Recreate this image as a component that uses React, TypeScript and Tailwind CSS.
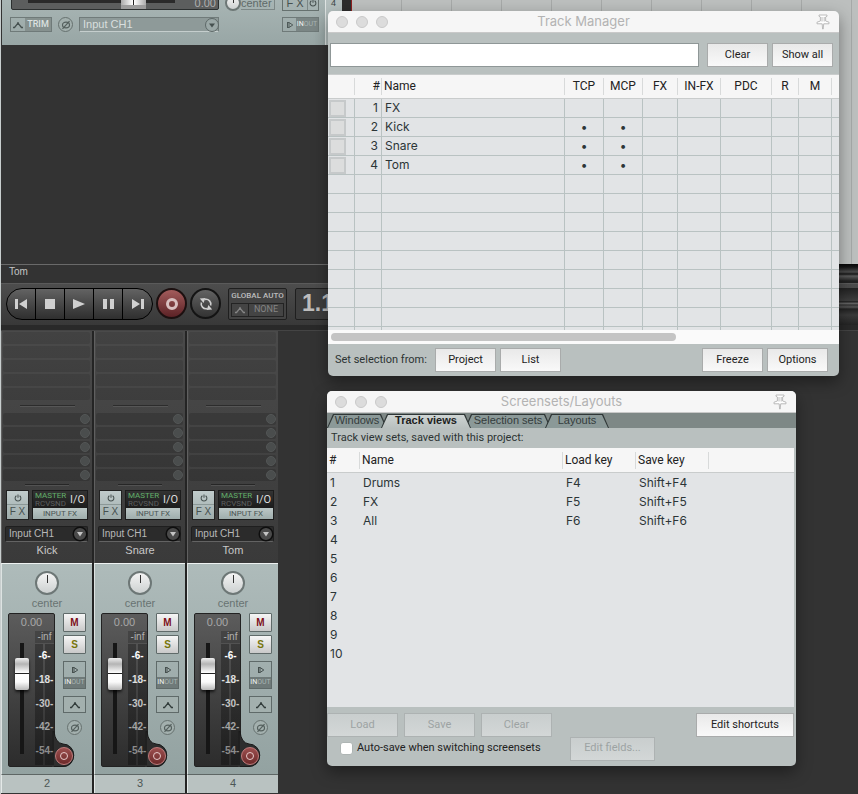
import React from 'react';
import { useState } from 'react';
import clsx from 'clsx';

interface TrackType {
    no: number;
    name: string;
    visible: boolean;
}

interface ScreensetType {
    name: string;
    load: string;
    save: string;
}

interface BtnType {
    content: string;
    className?: string;
    disabled?: boolean;
}

const tracks: TrackType[] = [
    { no: 1, name: 'FX', visible: false },
    { no: 2, name: 'Kick', visible: true },
    { no: 3, name: 'Snare', visible: true },
    { no: 4, name: 'Tom', visible: true },
];

const screensets: ScreensetType[] = [
    { name: 'Drums', load: 'F4', save: 'Shift+F4' },
    { name: 'FX', load: 'F5', save: 'Shift+F5' },
    { name: 'All', load: 'F6', save: 'Shift+F6' },
];

const managerCols = [
    { label: '', width: 'w-[27px]' },
    { label: '#', width: 'w-[27px]' },
    { label: 'Name', width: 'w-[183px]' },
    { label: 'TCP', width: 'w-[39px]' },
    { label: 'MCP', width: 'w-[39px]' },
    { label: 'FX', width: 'w-[35px]' },
    { label: 'IN-FX', width: 'w-[43px]' },
    { label: 'PDC', width: 'w-[51px]' },
    { label: 'R', width: 'w-[27px]' },
    { label: 'M', width: 'w-[33px]' },
];

const meterMarks = [
    { label: '-6-', color: 'text-white' },
    { label: '-18-', color: 'text-[#e0e0e0]' },
    { label: '-30-', color: 'text-[#c4c4c4]' },
    { label: '-42-', color: 'text-[#a4a4a4]' },
    { label: '-54-', color: 'text-[#8c8c8c]' },
];

// ---------- icons ----------
const EnvelopeIcon = ({ className }: { className?: string }) => (
    <svg
        viewBox="0 0 12 8"
        className={clsx('h-2 w-3', className)}
        fill="none"
        stroke="currentColor"
    >
        <path
            d="M1 6.5H2.5L6 2.2L9.5 6.5H11"
            strokeWidth="1.3"
        />
        <circle
            cx="6"
            cy="2.2"
            r="0.6"
            fill="currentColor"
        />
    </svg>
);

const PhaseIcon = () => (
    <svg
        viewBox="0 0 10 10"
        className="size-[10px]"
        fill="none"
        stroke="currentColor"
        strokeWidth="1.2"
    >
        <ellipse
            cx="5"
            cy="5"
            rx="3.5"
            ry="2.8"
        />
        <path d="M1.5 8.8L8.5 1.2" />
    </svg>
);

const PowerIcon = () => (
    <svg
        viewBox="0 0 10 10"
        className="size-2"
        fill="none"
        stroke="currentColor"
        strokeWidth="1.3"
    >
        <path d="M3 2.2A3.6 3.6 0 1 0 7 2.2M5 0.5V4.8" />
    </svg>
);

const MonitorIcon = () => (
    <svg
        viewBox="0 0 8 8"
        className="size-2"
        fill="none"
        stroke="currentColor"
    >
        <path d="M1.5 1V7M1.5 1.5H3V6.5H1.5M3 1.5L6.8 4L3 6.5" />
    </svg>
);

const PinIcon = () => (
    <svg
        viewBox="0 0 16 16"
        className="h-4 w-4"
        fill="#fff"
        stroke="#b4b4b4"
        strokeWidth="0.9"
    >
        <path d="M4 1H12V2.3L10.6 3V7L14 8.2V9.8H8.7L8.2 15H7.6L7.2 9.8H2V8.2L5.4 7V3L4 2.3Z" />
        <path d="M7 3V7.5M9.2 3V7.5" />
    </svg>
);

// ---------- window pieces ----------
const TitleBar = ({ title }: { title: string }) => (
    <div className="flex h-[22px] items-center border-b border-[#c9c9c9] bg-[#f6f6f6] px-2">
        <div className="flex flex-1 gap-2">
            {['Close', 'Minimize', 'Zoom'].map((name) => (
                <button
                    key={name}
                    type="button"
                    aria-label={name}
                    className="size-3 rounded-full border border-[#c9c9c9] bg-[#dcdcdc]"
                />
            ))}
        </div>
        <h2 className="pt-px text-[13px] text-[#b3b3b3]">{title}</h2>
        <div className="flex flex-1 justify-end">
            <button
                type="button"
                aria-label="Pin window"
            >
                <PinIcon />
            </button>
        </div>
    </div>
);

const WindowBtn = ({ content, className, disabled }: BtnType) => (
    <button
        type="button"
        disabled={disabled}
        className={clsx(
            'h-6 shrink-0 border font-[Roboto,sans-serif] text-[11px]',
            disabled
                ? 'border-[#adb2b2] bg-linear-to-b from-[#c9cece] to-[#d3d7d7] text-[#9da3a3]'
                : 'border-[#a9abab] bg-linear-to-b from-[#e9e9e9] to-[#f9f9f9] text-[#222]',
            className
        )}
    >
        {content}
    </button>
);

const TrackManager = () => {
    const [filter, setFilter] = useState('');
    return (
        <section className="absolute top-[11px] left-[327px] w-[511px] overflow-hidden rounded-[5px] bg-[#b9c0bf] shadow-[0_6px_16px_rgba(0,0,0,0.4)]">
            <TitleBar title="Track Manager" />
            <div className="flex h-[42px] items-center gap-1 border-b border-[#c9cccc] pt-[3px] pr-[6px] pl-[2px]">
                <input
                    type="text"
                    aria-label="Filter tracks"
                    className="mr-1 h-6 min-w-0 flex-1 border border-[#8f9797] bg-white px-1 text-xs"
                    value={filter}
                    onChange={(e) => setFilter(e.target.value)}
                />
                <WindowBtn
                    content="Clear"
                    className="w-[61px]"
                />
                <WindowBtn
                    content="Show all"
                    className="w-[61px]"
                />
            </div>
            <div className="h-[255px] overflow-hidden bg-[#e2e4e6]">
                <table className="w-full table-fixed border-separate border-spacing-0 text-xs text-[#2c3537]">
                    <thead>
                        <tr className="h-6 bg-[#f6f6f6] font-[Roboto,sans-serif] text-[#222]">
                            {managerCols.map((col) => (
                                <th
                                    key={col.label}
                                    className={clsx('border-b border-[#c9cccc] p-0 font-normal', col.width)}
                                >
                                    <div
                                        className={clsx(
                                            'h-[17px] border-r border-[#d8dada] leading-[17px]',
                                            col.label === '#' && 'pr-px text-right',
                                            col.label === 'Name' && 'pl-[2px] text-left'
                                        )}
                                    >
                                        {col.label}
                                    </div>
                                </th>
                            ))}
                            <th className="border-b border-[#c9cccc] p-0" />
                        </tr>
                    </thead>
                    <tbody className="[&_td]:h-[19px] [&_td]:border-r [&_td]:border-b [&_td]:border-[#b9c2c2] [&_td]:p-0 [&_td]:leading-[18px]">
                        {Array.from({ length: 13 }, (_, i) => {
                            const track = tracks[i];
                            return (
                                <tr key={i}>
                                    <td>
                                        {track && (
                                            <button
                                                type="button"
                                                aria-label={`Colour of ${track.name}`}
                                                className="ml-px block size-[17px] border-2 border-[#c6c9ca] bg-[#dcdddd]"
                                            />
                                        )}
                                    </td>
                                    <td className="pr-[3px]! text-right">{track?.no}</td>
                                    <td className="pl-[3px]!">{track?.name}</td>
                                    {managerCols.slice(3).map((col, c) => (
                                        <td
                                            key={col.label}
                                            className="text-center"
                                        >
                                            {track?.visible && c < 2 ? '•' : ''}
                                        </td>
                                    ))}
                                    <td className="border-r-0!" />
                                </tr>
                            );
                        })}
                    </tbody>
                </table>
            </div>
            <div className="flex h-[14px] items-center bg-[#fafafa] px-[3px]">
                <div className="h-2 w-[345px] rounded-full bg-[#c4c4c4]" />
            </div>
            <div className="flex h-8 items-center gap-1 pr-[11px] pl-[7px] font-[Roboto,sans-serif] text-[11px] text-[#2c3333]">
                <span className="w-[96px] whitespace-nowrap">Set selection from:</span>
                <WindowBtn
                    content="Project"
                    className="w-[61px]"
                />
                <WindowBtn
                    content="List"
                    className="w-[61px]"
                />
                <div className="flex-1" />
                <WindowBtn
                    content="Freeze"
                    className="w-[61px]"
                />
                <WindowBtn
                    content="Options"
                    className="w-[61px]"
                />
            </div>
        </section>
    );
};

const tabs = [
    { label: 'Windows', width: 'w-[60px]' },
    { label: 'Track views', width: 'w-[90px]' },
    { label: 'Selection sets', width: 'w-[86px]' },
    { label: 'Layouts', width: 'w-[64px]' },
];

const Screensets = () => {
    const [active, setActive] = useState('Track views');
    return (
        <section className="absolute top-[391px] left-[326px] w-[469px] overflow-hidden rounded-[5px] bg-[#b9c0bf] shadow-[0_6px_16px_rgba(0,0,0,0.4)]">
            <TitleBar title="Screensets/Layouts" />
            <div
                role="tablist"
                className="flex h-[15px] bg-[#7e8886] font-['Liberation_Sans',sans-serif]"
            >
                {tabs.map((tab) => (
                    <button
                        key={tab.label}
                        type="button"
                        role="tab"
                        aria-selected={active === tab.label}
                        onClick={() => setActive(tab.label)}
                        className={clsx(
                            'relative mt-px -mr-[6px] h-[14px] bg-[#2f3636] text-[11px] leading-3 [clip-path:polygon(6px_0,calc(100%-6px)_0,100%_100%,0_100%)]',
                            tab.width,
                            active === tab.label && 'z-10 font-bold'
                        )}
                    >
                        <span
                            className={clsx(
                                'block h-[14px] whitespace-nowrap [clip-path:polygon(7px_1px,calc(100%-7px)_1px,calc(100%-1px)_100%,1px_100%)]',
                                active === tab.label
                                    ? 'bg-linear-to-b from-[#d0d6d5] to-[#b9c0bf] text-[#1d2222]'
                                    : 'bg-[#8b9998] text-[#343c3c]'
                            )}
                        >
                            {tab.label}
                        </span>
                    </button>
                ))}
            </div>
            <p className="h-5 pl-1 font-[Roboto,sans-serif] text-[11px] leading-5 text-[#2c3333]">
                Track view sets, saved with this project:
            </p>
            <div className="mr-[2px] h-[259px] bg-[#e2e4e6]">
                <table className="w-full table-fixed border-separate border-spacing-0 text-left text-xs text-[#2c3537]">
                    <thead>
                        <tr className="h-[25px] bg-[#f6f6f6] font-[Roboto,sans-serif] text-[#222] [&_div]:h-[17px] [&_div]:border-r [&_div]:border-[#d8dada] [&_div]:pl-[2px] [&_div]:leading-[17px] [&_th]:border-b [&_th]:border-[#c9cccc] [&_th]:p-0 [&_th]:font-normal">
                            <th className="w-[33px]">
                                <div>#</div>
                            </th>
                            <th className="w-[203px]">
                                <div>Name</div>
                            </th>
                            <th className="w-[73px]">
                                <div>Load key</div>
                            </th>
                            <th className="w-[73px]">
                                <div>Save key</div>
                            </th>
                            <th />
                        </tr>
                    </thead>
                    <tbody className="[&_td]:h-[19px] [&_td]:p-0 [&_td]:pl-[3px]">
                        {Array.from({ length: 10 }, (_, i) => (
                            <tr key={i}>
                                <td>{i + 1}</td>
                                <td>{screensets[i]?.name}</td>
                                <td>{screensets[i]?.load}</td>
                                <td>{screensets[i]?.save}</td>
                                <td />
                            </tr>
                        ))}
                    </tbody>
                </table>
            </div>
            <div className="h-[59px] pt-[6px] pr-[2px]">
                <div className="flex gap-[6px]">
                    <WindowBtn
                        content="Load"
                        disabled
                        className="w-[71px]"
                    />
                    <WindowBtn
                        content="Save"
                        disabled
                        className="w-[71px]"
                    />
                    <WindowBtn
                        content="Clear"
                        disabled
                        className="w-[71px]"
                    />
                    <div className="flex-1" />
                    <WindowBtn
                        content="Edit shortcuts"
                        className="w-[98px]"
                    />
                </div>
                <div className="flex h-[23px] items-center pl-[13px] font-[Roboto,sans-serif] text-[11px] text-[#222]">
                    <label className="flex w-[230px] items-center gap-1">
                        <input
                            type="checkbox"
                            className="size-[13px] appearance-none rounded-[3px] border border-[#aeb5b4] bg-white checked:bg-[#3b82f6]"
                        />
                        Auto-save when switching screensets
                    </label>
                    <WindowBtn
                        content="Edit fields..."
                        disabled
                        className="w-[85px]"
                    />
                </div>
            </div>
        </section>
    );
};

// ---------- channel controls ----------
const PhaseBtn = () => (
    <button
        type="button"
        aria-label="Phase"
        className="flex size-[15px] shrink-0 items-center justify-center rounded-full border border-[#66716f] bg-[#a3b0ae] text-[#55605e]"
    >
        <PhaseIcon />
    </button>
);

const KnobInput = ({ label, className }: { label: string; className: string }) => (
    <input
        type="range"
        aria-label={label}
        defaultValue={50}
        className={clsx(
            'shrink-0 appearance-none rounded-full border-2 border-[#6d7776] bg-linear-to-b from-[#f4f4f4] to-[#cdd1d1] [&::-webkit-slider-thumb]:w-px [&::-webkit-slider-thumb]:appearance-none [&::-webkit-slider-thumb]:bg-[#333]',
            className
        )}
    />
);

const TrackPanel = () => (
    <div className="h-[45px] w-[324px] overflow-hidden border-r border-[#dfe4e3] bg-linear-to-b from-[#a8b5b4] to-[#98a6a5]">
        <div className="-mt-[15px] flex h-[26px] items-end pr-[6px] pl-[9px]">
            <div className="mb-px flex h-6 w-[208px] items-end rounded-[2px] border border-[#2c3030] bg-[#5c5e5e] text-[11px] leading-[11px] text-[#b0b0b0]">
                <input
                    type="range"
                    aria-label="Tom volume"
                    defaultValue={76}
                    className="ml-4 h-6 w-[147px] appearance-none bg-[linear-gradient(#2a2a2a,#2a2a2a)] bg-[length:100%_3px] bg-[position:0_15px] bg-no-repeat [&::-webkit-slider-thumb]:h-6 [&::-webkit-slider-thumb]:w-[25px] [&::-webkit-slider-thumb]:appearance-none [&::-webkit-slider-thumb]:border-b-4 [&::-webkit-slider-thumb]:border-[#9c9c9c] [&::-webkit-slider-thumb]:bg-[linear-gradient(90deg,#aaa,#fff_12px,#222_12px,#222_13px,#fff_13px,#aaa)]"
                />
                <span className="flex-1 pr-[2px] text-right">0.00</span>
            </div>
            <div className="ml-[6px] flex h-4 items-start">
                <KnobInput
                    label="Tom pan"
                    className="size-4 [&::-webkit-slider-thumb]:-mt-[6px] [&::-webkit-slider-thumb]:h-[6px]"
                />
                <span className="h-[15px] border-r border-b border-[#7d8887] pr-[2px] text-[11px] leading-4 text-[#5f6a69]">
                    center
                </span>
            </div>
            <div className="ml-auto flex h-6 items-end border border-[#66716f] text-[#46504f]">
                <button
                    type="button"
                    className="h-[22px] w-6 pt-2 text-[11px] leading-[14px]"
                >
                    F X
                </button>
                <button
                    type="button"
                    aria-label="Bypass effects"
                    className="flex h-[22px] w-[11px] items-end justify-center border-l border-[#7d8887] pb-[3px]"
                >
                    <PowerIcon />
                </button>
            </div>
        </div>
        <div className="mt-[6px] flex h-[15px] items-center pr-[6px] pl-2 text-[#4f5a59]">
            <button
                type="button"
                className="flex h-[15px] w-[42px] items-center border border-[#6f7a79] font-[Roboto,sans-serif] text-[9px] font-medium text-[#dbe1e0]"
            >
                <EnvelopeIcon className="mx-px shrink-0 text-[#465150]" />
                <span className="flex h-[13px] flex-1 items-center justify-center bg-[#86918f]">TRIM</span>
            </button>
            <div className="ml-[6px] flex">
                <PhaseBtn />
            </div>
            <div className="relative ml-[6px] flex">
                <select
                    aria-label="Tom input"
                    className="h-[15px] w-[140px] appearance-none border border-[#707b7a] border-b-[#c5cecd] bg-[#8e9a99] pl-[3px] text-[11px] leading-[13px] text-[#d9dfde]"
                >
                    <option>Input CH1</option>
                </select>
                <svg
                    viewBox="0 0 14 14"
                    className="pointer-events-none absolute top-px right-0 size-[14px]"
                >
                    <circle
                        cx="7"
                        cy="7"
                        r="6.5"
                        fill="#9ba8a7"
                        stroke="#5d6867"
                    />
                    <path
                        d="M4 5.5H10L7 9.5Z"
                        fill="#465150"
                    />
                </svg>
            </div>
            <button
                type="button"
                className="ml-auto flex h-[15px] w-[37px] items-center border border-[#6f7a79] font-[Roboto,sans-serif] text-[7px] text-[#a9b5b4]"
            >
                <span className="flex w-[13px] justify-center text-[#4f5a59]">
                    <MonitorIcon />
                </span>
                <span className="flex h-[13px] flex-1 items-center justify-center bg-[#7b8685]">
                    <span className="text-[#f0f4f3]">IN</span>OUT
                </span>
            </button>
        </div>
    </div>
);

const Strip = ({ track }: { track: TrackType }) => (
    <section
        aria-label={track.name}
        className="w-[93px] border-r-2 border-[#242424] last:border-transparent"
    >
        <div className="h-[232px] border-l border-[#606060] bg-linear-to-b from-[#4a4a4a] to-[#3a3a3a] text-[#c4c8c8]">
            <div className="flex flex-col gap-[2px] pt-px pr-[2px] pl-px">
                {[0, 1, 2, 3, 4].map((i) => (
                    <div
                        key={i}
                        className="h-3 rounded-[2px] bg-black/10"
                    />
                ))}
            </div>
            <div className="mx-auto mt-[5px] h-[2px] w-[55px] border-b border-[#565656] bg-[#2c2c2c]" />
            <div className="mt-[6px] flex flex-col gap-[2px] pr-[2px] pl-px">
                {[0, 1, 2, 3, 4].map((i) => (
                    <div
                        key={i}
                        className="flex h-3 items-center justify-end rounded-[2px] bg-black/15"
                    >
                        <span className="size-[10px] rounded-full border border-[#535656] bg-[#4a4d4d]" />
                    </div>
                ))}
            </div>
            <div className="mx-auto mt-[3px] h-[2px] w-11 border-b border-[#525252] bg-[#262626]" />
            <div className="mt-1 flex justify-between pr-1 pl-1">
                <div className="flex h-[30px] w-[23px] flex-col border border-[#222] bg-linear-to-b from-[#c0cbcb] to-[#9fadac] text-[#46504f]">
                    <button
                        type="button"
                        aria-label="Bypass effects"
                        className="flex flex-1 items-center justify-center border-b border-[#8b9897]"
                    >
                        <PowerIcon />
                    </button>
                    <button
                        type="button"
                        className="flex-1 text-[10px] leading-[14px]"
                    >
                        F X
                    </button>
                </div>
                <div className="flex w-[56px] flex-col border border-[#1c1c1c] bg-[#242424] font-[Roboto,sans-serif]">
                    <button
                        type="button"
                        className="flex h-[17px] items-center justify-between bg-linear-to-b from-[#333] to-[#1c1c1c] px-[2px] whitespace-nowrap"
                    >
                        <span className="text-left text-[8px] leading-2">
                            <span className="block text-[#62b06a]">MASTER</span>
                            <span className="block text-[#5c5f5f]">RCVSND</span>
                        </span>
                        <span className="text-[11px] leading-3 text-[#dedede]">I/O</span>
                    </button>
                    <button
                        type="button"
                        className="h-[11px] bg-linear-to-b from-[#bcc8c7] to-[#9fadac] text-[8px] leading-[11px] text-[#4b5655]"
                    >
                        INPUT FX
                    </button>
                </div>
            </div>
            <div className="relative mt-[6px] mr-1 ml-[3px]">
                <select
                    aria-label={`${track.name} input`}
                    className="block h-4 w-full appearance-none rounded-[2px] border border-[#1f1f1f] border-b-[#636363] bg-[#2b2b2b] pl-[3px] text-[10px] leading-[14px] text-[#b8b8b8]"
                >
                    <option>Input CH1</option>
                </select>
                <svg
                    viewBox="0 0 16 16"
                    className="pointer-events-none absolute top-0 right-0 size-4"
                >
                    <circle
                        cx="8"
                        cy="8"
                        r="6.8"
                        fill="#4a4a4a"
                        stroke="#0e0e0e"
                        strokeWidth="1.5"
                    />
                    <path
                        d="M5 6H11L8 10.5Z"
                        fill="#c4c4c4"
                    />
                </svg>
            </div>
            <p className="text-center text-[11px] leading-4 text-[#c8c8c8]">{track.name}</p>
        </div>
        <div className="h-[211px] border-t border-l border-[#dde3e2] border-t-[#eef2f1] bg-linear-to-b from-[#aebbba] to-[#93a2a1]">
            <div className="flex h-[49px] flex-col items-center pt-[7px] text-[11px] leading-4 text-[#687372]">
                <KnobInput
                    label={`${track.name} pan`}
                    className="size-6 [&::-webkit-slider-thumb]:-mt-2 [&::-webkit-slider-thumb]:h-2"
                />
                center
            </div>
            <div className="flex gap-2 pl-[6px]">
                <div className="relative h-[154px] w-[47px] rounded-[2px] border border-[#222] bg-linear-to-b from-[#5c5c5c] to-[#2c2c2c] text-[10px]">
                    {/* record arm sits in a bulge on the corner of the fader panel */}
                    <svg
                        viewBox="0 0 24 36"
                        className="absolute top-[117px] left-[43px] h-9 w-6"
                    >
                        <path
                            d="M0 0H2Q3 12 11 13A10.5 11 0 0 1 11 36H0Z"
                            fill="#2e2e2e"
                        />
                        <path
                            d="M2 0Q3 12 11 13A10.5 11 0 0 1 11 35.5H2"
                            fill="none"
                            stroke="#1a1a1a"
                        />
                    </svg>
                    <button
                        type="button"
                        aria-label={`Record arm ${track.name}`}
                        className="absolute top-[133px] left-[46px] flex size-[18px] items-center justify-center rounded-full border border-[#c27c7c] bg-linear-to-b from-[#9c4f4f] to-[#6d2a2a]"
                    >
                        <span className="size-2 rounded-full border-[1px] border-[#e6c9c9]" />
                    </button>
                    <p className="pt-[2px] text-center text-[11px] leading-3 text-[#a8a8a8]">0.00</p>
                    <div className="flex justify-between pl-[6px]">
                        <input
                            type="range"
                            aria-label={`${track.name} volume`}
                            defaultValue={81}
                            className="mt-[15px] h-[111px] w-[14px] appearance-none bg-[linear-gradient(#161616,#161616)] bg-[length:4px_100%] bg-center bg-no-repeat [direction:rtl] [writing-mode:vertical-lr] [&::-webkit-slider-thumb]:h-8 [&::-webkit-slider-thumb]:w-[14px] [&::-webkit-slider-thumb]:appearance-none [&::-webkit-slider-thumb]:rounded-[2px] [&::-webkit-slider-thumb]:bg-[linear-gradient(#eee,#b4b4b4_6px,#fff_15px,#222_15px,#222_16px,#fff_16px,#fafafa_24px,#b8b8b8)] [&::-webkit-slider-thumb]:shadow-[0_2px_3px_rgba(0,0,0,0.7)]"
                        />
                        <div className="relative z-10 mt-[3px] w-[19px] text-center">
                            <p className="h-3 bg-black/20 text-[10px] leading-3 text-[#b0b0b0]">-inf</p>
                            <div className="mt-px flex h-[121px] flex-col justify-between bg-[linear-gradient(90deg,rgba(0,0,0,0.3)_8px,transparent_8px,transparent_10px,rgba(0,0,0,0.3)_10px)] pt-[6px] pb-2">
                                {meterMarks.map((mark) => (
                                    <span
                                        key={mark.label}
                                        className={clsx('leading-3 font-bold', mark.color)}
                                    >
                                        {mark.label}
                                    </span>
                                ))}
                            </div>
                        </div>
                    </div>
                </div>
                <div className="flex w-[23px] flex-col items-center text-[11px] font-bold">
                    <button
                        type="button"
                        className="h-[19px] w-[23px] rounded-[1px] border border-[#5f6a69] bg-linear-to-b from-[#f6f6f6] to-[#c9c9c9] text-[10px] leading-4 text-[#7d0f1a]"
                    >
                        M
                    </button>
                    <button
                        type="button"
                        className="mt-[3px] h-[19px] w-[23px] rounded-[1px] border border-[#5f6a69] bg-linear-to-b from-[#f6f6f6] to-[#c9c9c9] text-[10px] leading-4 text-[#77760c]"
                    >
                        S
                    </button>
                    <button
                        type="button"
                        className="mt-[7px] flex h-7 w-[23px] flex-col border border-[#5f6a69] font-[Roboto,sans-serif] text-[7px] font-normal text-[#a9b5b4]"
                    >
                        <span className="flex h-[15px] w-full items-center justify-center text-[#46504f]">
                            <MonitorIcon />
                        </span>
                        <span className="flex h-[11px] w-full items-center justify-center bg-[#6f7a79]">
                            <span className="text-[#f0f4f3]">IN</span>OUT
                        </span>
                    </button>
                    <button
                        type="button"
                        aria-label="Envelopes"
                        className="mt-[7px] flex h-[17px] w-[23px] items-center justify-center border border-[#5f6a69] bg-[#a3b0ae] text-[#333d3c]"
                    >
                        <EnvelopeIcon />
                    </button>
                    <div className="mt-[7px]">
                        <PhaseBtn />
                    </div>
                </div>
            </div>
        </div>
        <div className="h-[19px] border-t border-l border-[#e4e9e8] border-t-[#5e6665] bg-[#b9c2c1] text-center text-[11px] leading-4 text-[#4c5655]">
            {track.no}
        </div>
    </section>
);

const transportIcons = [
    { name: 'Go to start', path: 'M1 1H4V11H1ZM13 1V11L5 6Z' },
    { name: 'Stop', path: 'M2 1H12V11H2Z' },
    { name: 'Play', path: 'M1 1L13 6L1 11Z' },
    { name: 'Pause', path: 'M2 1H6V11H2ZM9 1H13V11H9Z' },
    { name: 'Go to end', path: 'M1 1V11L9 6ZM10 1H13V11H10Z' },
];

const Transport = () => (
    <div className="flex h-[42px] items-start overflow-hidden border-t border-[#5a5a5a] bg-linear-to-b from-[#4d4d4d] to-[#383838] pt-1 pl-[5px]">
        <div className="flex h-8 shrink-0 divide-x divide-black overflow-hidden rounded-full border border-black bg-linear-to-b from-[#636363] to-[#2f2f2f]">
            {transportIcons.map((icon) => (
                <button
                    key={icon.name}
                    type="button"
                    aria-label={icon.name}
                    className="flex w-[29px] items-center justify-center"
                >
                    <svg
                        viewBox="0 0 14 12"
                        className="h-3 w-[14px]"
                        fill="#d0d0d0"
                    >
                        <path d={icon.path} />
                    </svg>
                </button>
            ))}
        </div>
        <button
            type="button"
            aria-label="Record"
            className="ml-[3px] flex size-[31px] shrink-0 items-center justify-center rounded-full border-2 border-[#1c1010] bg-linear-to-b from-[#a35c5c] to-[#5c2226]"
        >
            <span className="size-3 rounded-full border-[3px] border-[#d9c0c0]" />
        </button>
        <button
            type="button"
            aria-label="Repeat"
            className="ml-[3px] flex size-[31px] shrink-0 items-center justify-center rounded-full border-2 border-[#141414] bg-linear-to-b from-[#636363] to-[#333]"
        >
            <svg
                viewBox="0 0 16 16"
                className="size-4"
                fill="none"
                stroke="#d0d0d0"
                strokeWidth="1.6"
            >
                <path d="M7 3.4A4.8 4.8 0 0 1 12.6 9.5M9 12.6A4.8 4.8 0 0 1 3.4 6.5" />
                <path
                    d="M1.8 2.6L7.4 2L5.6 7ZM14.2 13.4L8.6 14L10.4 9Z"
                    fill="#d0d0d0"
                    stroke="none"
                />
            </svg>
        </button>
        <div className="ml-[7px] h-8 w-[59px] shrink-0 rounded-[2px] border border-[#1f1f1f] bg-[#444] text-center font-[Roboto,sans-serif] text-[8px] text-[#bcbcbc]">
            <p className="leading-[14px] font-medium whitespace-nowrap">GLOBAL AUTO</p>
            <button
                type="button"
                className="mx-auto flex h-[14px] w-[53px] items-center border border-[#232323] text-[#858585]"
            >
                <EnvelopeIcon className="mx-[2px]" />
                <span className="flex-1 border-l border-[#232323] text-[9px]">NONE</span>
            </button>
        </div>
        <div className="ml-2 h-8 w-[120px] shrink-0 rounded-[2px] border border-[#1f1f1f] bg-[#3e3e3e] pl-[6px] text-[23px] leading-7 font-bold text-[#bdbdbd]">
            1.1.00
        </div>
        <div className="ml-auto h-[37px] w-[440px] bg-[linear-gradient(#222,#3f3f3f_13px,#111_14px,#707070_15px,#333_17px,#555_19px,#222_21px,#3a3a3a_27px,#242424)]" />
    </div>
);

const App = () => {
    return (
        <main className="relative min-h-screen overflow-hidden border-l border-[#c8cece] bg-[#333] font-['Liberation_Sans',Arial,sans-serif]">
            <div>
                <div className="flex h-[264px] pl-px">
                    <TrackPanel />
                    <div className="h-[45px] w-4 bg-[#b5c0bf] pl-[5px] text-[9px] leading-[7px] text-[#3c4443]">4</div>
                    <div className="w-[9px] bg-[#2c2c2c]" />
                    <div className="flex-1 border-l border-[#8c1f1f] bg-[#bcbfbe] bg-[repeating-linear-gradient(90deg,transparent_0px,transparent_49px,#a6a9a8_49px,#a6a9a8_50px)]" />
                </div>
                <div className="flex h-[19px] text-[10px] leading-[14px] text-[#c4c4c4]">
                    <div className="flex-1 border-t border-[#6a6a6a] pl-2">Tom</div>
                    <div className="w-[450px] bg-[linear-gradient(#080808,#161616_3px,#4c4c4c_8px,#181818_10px,#5a5a5a_12px,#222_17px)]" />
                </div>
                <Transport />
                <div className="h-[6px] border-b border-[#444] bg-[#292929]" />
                <div className="flex">
                    {tracks.slice(1).map((track) => (
                        <Strip
                            key={track.no}
                            track={track}
                        />
                    ))}
                </div>
            </div>
            <div className="font-[Inter,sans-serif]">
                <TrackManager />
                <Screensets />
            </div>
        </main>
    );
};

export default App;
